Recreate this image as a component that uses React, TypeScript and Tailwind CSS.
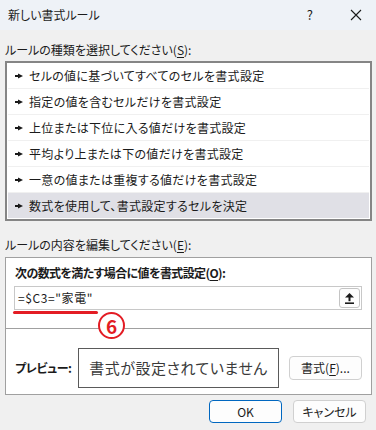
import React from "react";

const rows = [
  "セルの値に基づいてすべてのセルを書式設定",
  "指定の値を含むセルだけを書式設定",
  "上位または下位に入る値だけを書式設定",
  "平均より上または下の値だけを書式設定",
  "一意の値または重複する値だけを書式設定",
  "数式を使用して、書式設定するセルを決定",
];

function Arrow() {
  return (
    <svg width="8" height="6" viewBox="0 0 8 6" className="shrink-0">
      <rect x="0" y="2" width="4" height="2" fill="#1a1a1a" />
      <polygon points="3,0.5 8,3 3,5.5" fill="#1a1a1a" />
    </svg>
  );
}

export default function App() {
  return (
    <div
      className="w-[376px] h-[430px] bg-[#f0f0f0] flex flex-col overflow-hidden text-[#1b1b1b] [font-feature-settings:'palt']"
      style={{ fontFamily: '"Noto Sans CJK JP", "Noto Sans", sans-serif' }}
    >
      {/* title bar */}
      <div className="h-[30px] shrink-0 bg-[#eef2f7] flex items-center pl-[8px] pr-[14px] text-[12px]">
        <span>新しい書式ルール</span>
        <span className="ml-auto text-[13px]">?</span>
        <svg width="12" height="12" viewBox="0 0 12 12" className="ml-[37px]">
          <path d="M1 1 L11 11 M11 1 L1 11" stroke="#1a1a1a" strokeWidth="1.1" fill="none" />
        </svg>
      </div>

      <div className="flex flex-col pl-[5px] pr-[4px]">
        <div className="mt-[12px] h-[16px] leading-[16px] text-[12px]">
          ルールの種類を選択してください(<span className="underline underline-offset-2">S</span>):
        </div>

        {/* rule list */}
        <div className="mt-[3px] border-2 border-[#858585] bg-white px-[1px] pb-[1px] flex flex-col">
          {rows.map((r, i) => (
            <div
              key={i}
              className={
                i === rows.length - 1
                  ? "h-[25px] flex items-center gap-[6px] pl-[7px] text-[12px] tracking-[0.3px] bg-[#e0e0e6]"
                  : "h-[26px] flex items-center gap-[6px] pl-[7px] text-[12px] tracking-[0.3px] border-b border-[#f0f0f0]"
              }
            >
              <Arrow />
              <span>{r}</span>
            </div>
          ))}
        </div>

        <div className="mt-[16px] h-[16px] leading-[16px] text-[12px]">
          ルールの内容を編集してください(<span className="underline underline-offset-2">E</span>):
        </div>

        {/* edit box */}
        <div className="relative mt-[4px] border border-[#a0a0a0] bg-white flex flex-col pb-[6px]">
          <div className="mt-[7px] pl-[9px] h-[16px] leading-[16px] text-[12px] font-bold tracking-[-0.6px]">
            次の数式を満たす場合に値を書式設定(<span className="underline underline-offset-2">O</span>):
          </div>
          <div className="mt-[5px] ml-[8px] mr-[9px] h-[24px] border border-[#c8c8c8] flex items-center pl-[3px] pr-[1px]">
            <span className="text-[12px] tracking-[0.6px]">=$C3="家電"</span>
            <div className="ml-auto w-[21px] h-[20px] rounded-[3px] border border-[#c4c4c4] bg-[#fdfdfd] flex items-center justify-center">
              <svg width="9" height="11" viewBox="0 0 9 11">
                <polygon points="4.5,0 9,4.6 0,4.6" fill="#1a1a1a" />
                <rect x="3.5" y="4" width="2" height="4.2" fill="#1a1a1a" />
                <rect x="0" y="9.4" width="9" height="1.6" fill="#1a1a1a" />
              </svg>
            </div>
          </div>
          <div className="mt-[18px] h-px bg-[#a0a0a0]" />
          <div className="mt-[19px] pl-[9px] flex items-center">
            <span className="w-[63px] text-[12px] font-bold tracking-[-0.4px]">プレビュー:</span>
            <div className="w-[201px] h-[40px] border border-[#5a5a5a] flex items-center justify-center text-[15px] text-[#3a3a3a] tracking-[0.5px]">
              書式が設定されていません
            </div>
            <div className="ml-[10px] w-[73px] h-[24px] rounded-[4px] border border-[#d0d0d0] bg-[#fdfdfd] flex items-center justify-center text-[12px]">
              書式(<span className="underline underline-offset-2">F</span>)...
            </div>
          </div>

          {/* annotation */}
          <div className="absolute left-[7px] top-[53px] w-[85px] h-[3px] rounded-full bg-[#e31c24]" />
          <div className="absolute left-[92px] top-[54px] w-[27px] h-[27px] rounded-full border-2 border-[#e31c24] bg-white flex items-center justify-center text-[19px] font-bold text-[#e31c24] leading-none">
            6
          </div>
        </div>

        {/* buttons */}
        <div className="mt-[5px] flex justify-end gap-[11px] pr-[6px]">
          <div className="w-[73px] h-[23px] rounded-[4px] border border-[#0067c0] bg-[#fdfdfd] flex items-center justify-center text-[12px]">
            OK
          </div>
          <div className="w-[73px] h-[23px] rounded-[4px] border border-[#d0d0d0] bg-[#fdfdfd] flex items-center justify-center text-[12px]">
            キャンセル
          </div>
        </div>
      </div>
    </div>
  );
}
